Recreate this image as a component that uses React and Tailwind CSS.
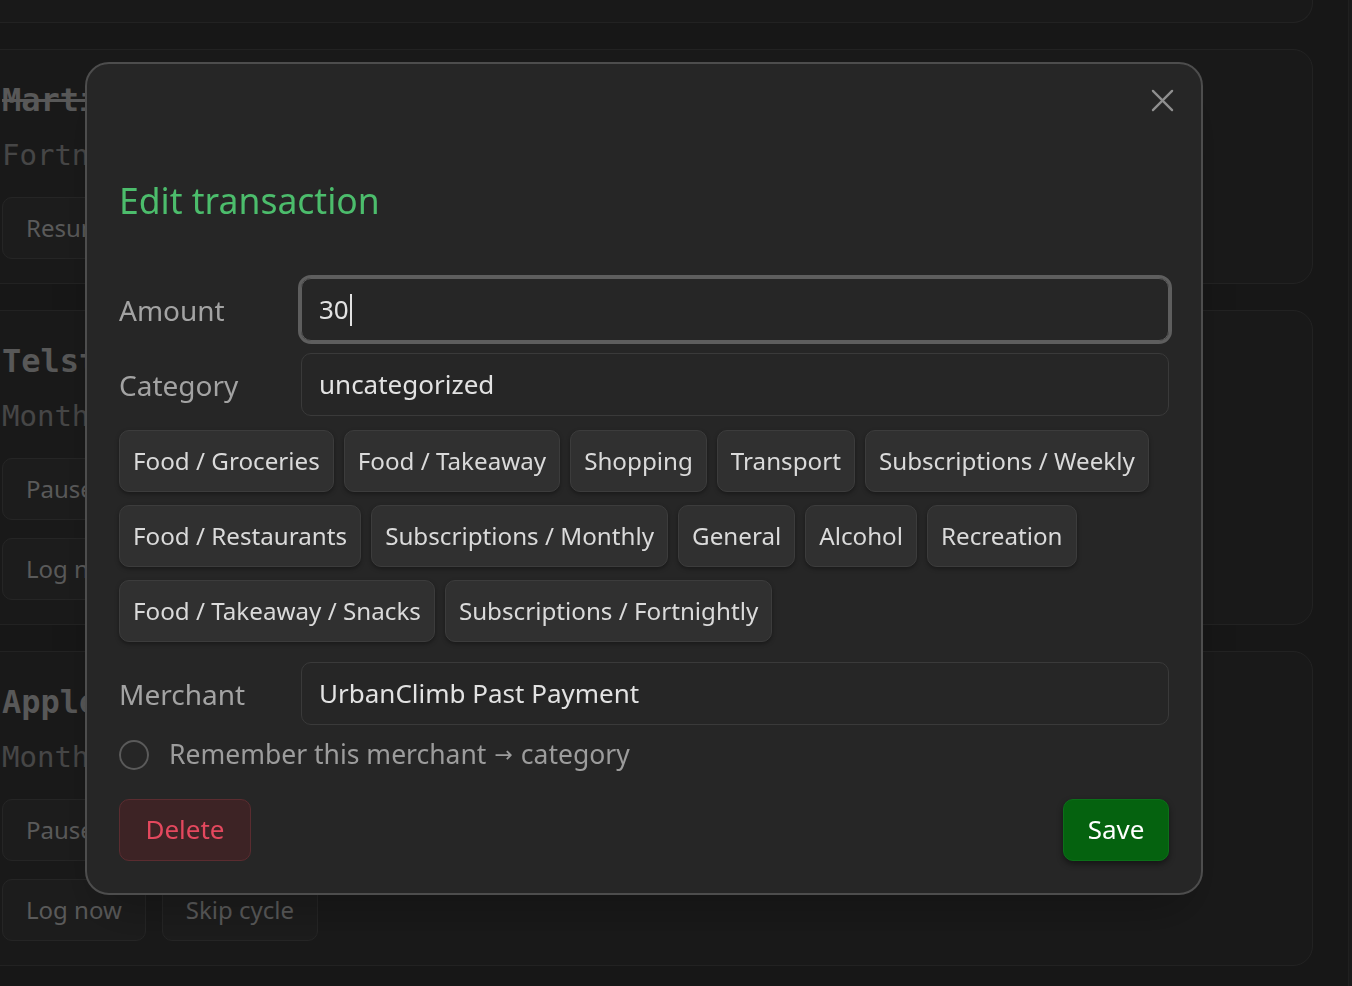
import React from 'react';

const categories = [
    ['Food / Groceries', 'Food / Takeaway', 'Shopping', 'Transport', 'Subscriptions / Weekly'],
    ['Food / Restaurants', 'Subscriptions / Monthly', 'General', 'Alcohol', 'Recreation'],
    ['Food / Takeaway / Snacks', 'Subscriptions / Fortnightly'],
];

const sans = "font-['Noto_Sans',sans-serif]";
const mono = "font-['DejaVu_Sans_Mono',monospace]";

const GhostButton = ({ children }) => (
    <button className={`h-[62px] px-[23px] rounded-[10px] bg-[#292929] border border-[#363636] text-[#818181] text-[24px] ${sans}`}>
        {children}
    </button>
);

const RecurringCard = ({ title, subtitle, struck, paused }) => (
    <div className="rounded-[20px] bg-[#252525] border border-[#323232] pt-[28px] px-[31px] pb-[24px]">
        <div className={`text-[32px] leading-[44px] font-bold text-[#7e7e7e] ${mono} ${struck ? 'line-through' : ''}`}>{title}</div>
        <div className={`mt-[13px] text-[29px] leading-[40px] text-[#656565] ${mono}`}>{subtitle}</div>
        <div className="mt-[22px] flex flex-col gap-[18px]">
            {paused ? (
                <div className="flex gap-4">
                    <GhostButton>Resume</GhostButton>
                </div>
            ) : (
                <>
                    <div className="flex gap-4">
                        <GhostButton>Pause</GhostButton>
                    </div>
                    <div className="flex gap-4">
                        <GhostButton>Log now</GhostButton>
                        <GhostButton>Skip cycle</GhostButton>
                    </div>
                </>
            )}
        </div>
    </div>
);

const Field = ({ label, value, focused }) => (
    <div className="flex items-center">
        <div className={`w-[182px] text-[28px] text-[#a3a3a3] ${sans}`}>{label}</div>
        <div
            className={`flex-1 h-[63px] flex items-center px-[17px] rounded-[10px] bg-[#262626] border text-[26px] text-[#e2e2e2] ${sans} ${
                focused ? 'border-[#5e5e5e] outline-[3px] outline-solid outline-[#5e5e5e]' : 'border-[#3a3a3a]'
            }`}
        >
            {value}
            {focused && <span className="ml-[1px] w-[2px] h-[32px] bg-[#e2e2e2]" />}
        </div>
    </div>
);

const EditTransaction = () => (
    <div className="ml-[85px] mt-[62px] w-[1118px] rounded-[24px] bg-[#262626] border-2 border-[#4d4d4d] shadow-2xl pt-[14px] px-[32px] pb-[32px]">
        <div className="flex justify-end -mr-[15px]">
            <button className="w-[44px] h-[44px] flex items-center justify-center text-[#8f8f8f]">
                <svg width="23" height="23" viewBox="0 0 24 24" fill="none" stroke="currentColor" strokeWidth="2.4" strokeLinecap="round">
                    <path d="M2 2 L22 22 M22 2 L2 22" />
                </svg>
            </button>
        </div>

        <h2 className={`mt-[56px] text-[35.5px] leading-[44px] text-[#4cbd6c] ${sans}`}>Edit transaction</h2>

        <div className="mt-[56px] flex flex-col gap-[12px]">
            <Field label="Amount" value="30" focused />
            <Field label="Category" value="uncategorized" />
        </div>

        {/* quick-pick category chips */}
        <div className="mt-[14px] flex flex-col gap-[13px]">
            {categories.map((row, i) => (
                <div key={i} className="flex gap-[10px]">
                    {row.map((c) => (
                        <button
                            key={c}
                            className={`h-[62px] px-[13px] rounded-[10px] bg-[#303030] border border-[#3c3c3c] shadow-[0_2px_4px_rgba(0,0,0,0.35)] text-[24.2px] text-[#dadada] whitespace-nowrap ${sans}`}
                        >
                            {c}
                        </button>
                    ))}
                </div>
            ))}
        </div>

        <div className="mt-[20px]">
            <Field label="Merchant" value="UrbanClimb Past Payment" />
        </div>

        <label className="mt-[10px] flex items-center gap-[20px] cursor-pointer">
            <span className="w-[30px] h-[30px] rounded-full border-2 border-[#5a5a5a]" />
            <span className={`text-[26.5px] text-[#9c9c9c] ${sans}`}>
                Remember this merchant
                <span className="mx-[8px] relative -top-[2px] font-['DejaVu_Sans',sans-serif] text-[22px]">→</span>
                category
            </span>
        </label>

        <div className="mt-[24px] flex justify-between">
            <button className={`h-[62px] w-[132px] rounded-[10px] bg-[#3d2325] border border-[#5b2c30] text-[26px] text-[#e4485e] ${sans}`}>
                Delete
            </button>
            <button className={`h-[62px] w-[106px] rounded-[10px] bg-[#05620f] border border-[#0b7019] shadow-[0_3px_6px_rgba(0,0,0,0.45)] text-[26px] text-white ${sans}`}>
                Save
            </button>
        </div>
    </div>
);

export default function App() {
    return (
        <div className="relative h-[986px] overflow-hidden bg-[#212121] flex">
            <div className="flex-1">
                <div className="ml-[-30px] w-[1343px] flex flex-col gap-[26px]">
                    <div className="h-[23px] rounded-b-[20px] bg-[#252525] border border-t-0 border-[#323232]" />
                    <RecurringCard title="Martial arts" subtitle="Fortnightly" struck paused />
                    <RecurringCard title="Telstra" subtitle="Monthly" />
                    <RecurringCard title="Apple One" subtitle="Monthly" />
                </div>
            </div>
            <div className="w-[4px] bg-[#262626] border-l border-[#2e2e2e]" />

            <div className="fixed inset-0 bg-black/30">
                <EditTransaction />
            </div>
        </div>
    );
}
